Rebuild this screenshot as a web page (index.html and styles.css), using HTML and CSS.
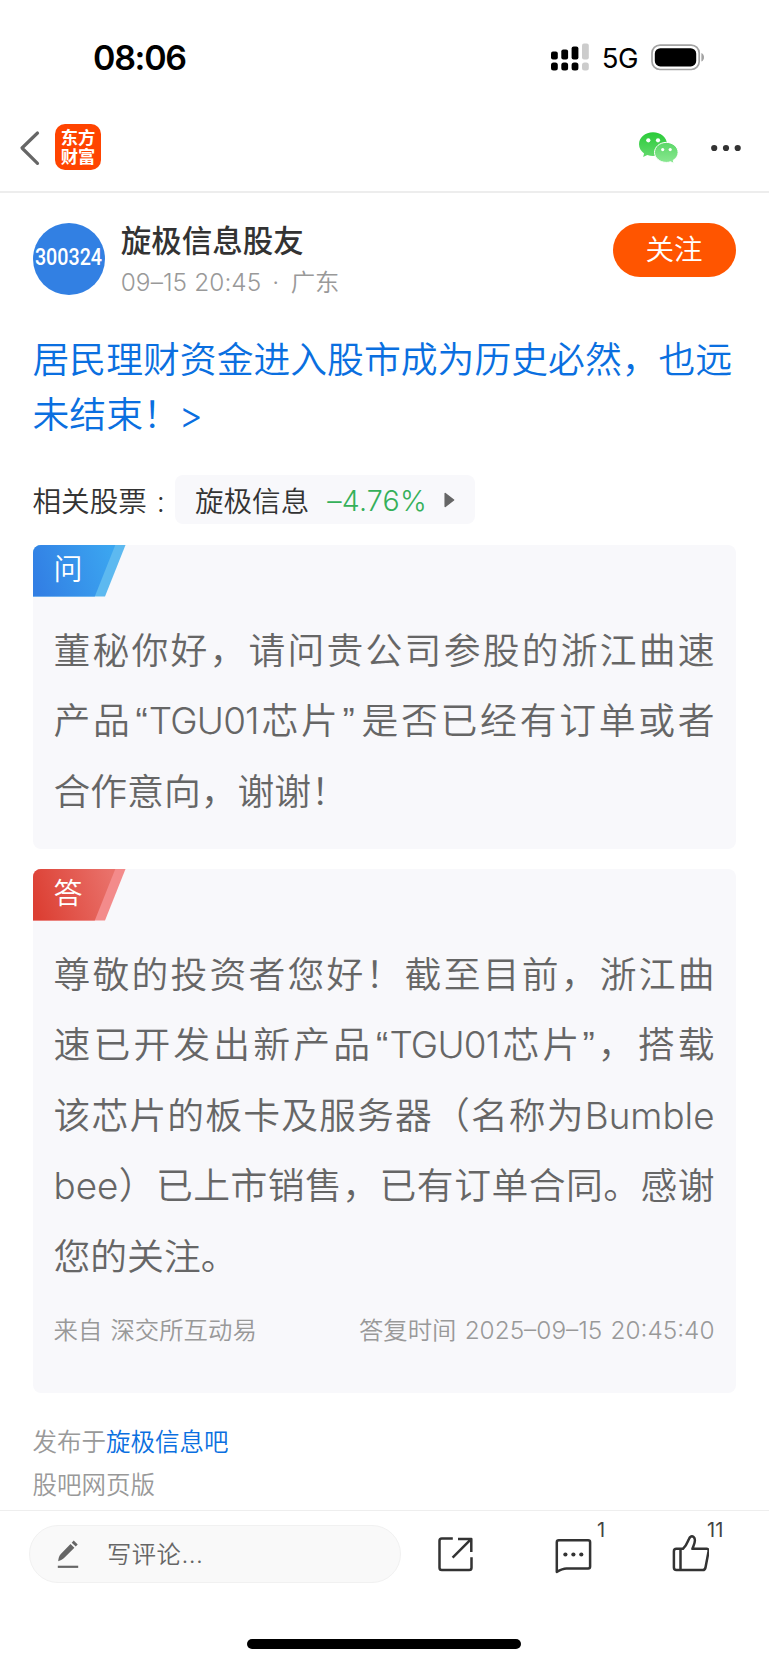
FILE: index.html
```html
<!DOCTYPE html>
<html lang="zh-CN">
<head>
<meta charset="utf-8">
<title>旋极信息吧</title>
<link rel="stylesheet" href="styles.css">
</head>
<body>
<div class="status-bar">
  <span class="clock">08:06</span>
  <div class="status-icons">
    <svg class="signal" width="38" height="28" viewBox="0 0 38 28">
      <rect x="0" y="8.5" width="6.8" height="8" rx="2"/><rect x="10.3" y="6.5" width="6.8" height="10" rx="2"/><rect x="20.6" y="3.5" width="6.8" height="13" rx="2"/><rect class="dim" x="31" y="0.5" width="6.8" height="16" rx="2"/>
      <rect x="0" y="19.5" width="6.8" height="8" rx="2.5"/><rect x="10.3" y="19.5" width="6.8" height="8" rx="2.5"/><rect x="20.6" y="19.5" width="6.8" height="8" rx="2.5"/><rect class="dim" x="31" y="19.5" width="6.8" height="8" rx="2.5"/>
    </svg>
    <span class="network">5G</span>
    <svg class="battery" width="54" height="27" viewBox="0 0 54 27">
      <rect x="1" y="1.1" width="47.2" height="24.4" rx="8" fill="none" stroke="#a3a3a3" stroke-width="1.7"/>
      <rect x="3.8" y="4.2" width="41.4" height="18.2" rx="5.5"/>
      <path d="M50.4 9v8.6c3.5-1.4 3.5-7.200 0-8.600z" fill="#a3a3a3"/>
    </svg>
  </div>
</div>

<div class="nav">
  <svg class="back" width="22" height="36" viewBox="0 0 22 36"><path d="M18.500 3 3 18l15.500 15.300" fill="none" stroke="#666" stroke-width="3.200" stroke-linecap="round" stroke-linejoin="round"/></svg>
  <div class="logo"><span>东方</span><span>财富</span></div>
  <svg class="wechat" width="40" height="33" viewBox="0 0 40 33">
    <defs>
      <linearGradient id="wg1" x1="0" y1="0" x2="0" y2="1"><stop offset="0" stop-color="#2acb38"/><stop offset="1" stop-color="#63d96d"/></linearGradient>
      <linearGradient id="wg2" x1="0" y1="0" x2="0" y2="1"><stop offset="0" stop-color="#5cd768"/><stop offset="1" stop-color="#8be892"/></linearGradient>
    </defs>
    <path d="M14 .3C6.200.3 0 5.600 0 12.200c0 3.700 2 7 5.100 9.200l-1 3.600 4.200-2.100c1.800.7 3.700 1 5.700 1 7.800 0 14-5.200 14-11.700S21.800.3 14 .3z" fill="url(#wg1)"/>
    <path d="M27.300 10.400c-6.500 0-11.800 4.500-11.800 10s5.300 10 11.800 10c1.500 0 2.900-.2 4.300-.7l3.400 1.900-.8-3.300c3-1.800 4.900-4.700 4.900-7.900 0-5.500-5.300-10-11.800-10z" fill="url(#wg2)" stroke="#fff" stroke-width="1"/>
    <g fill="#fff"><circle cx="9.300" cy="8.300" r="2.100"/><circle cx="19" cy="8.300" r="2.100"/><circle cx="23.700" cy="17.600" r="1.600"/><circle cx="31.200" cy="17.600" r="1.600"/></g>
  </svg>
  <svg class="more" width="30" height="8" viewBox="0 0 30 8"><g fill="#333"><circle cx="3.200" cy="4" r="3.100"/><circle cx="15" cy="4" r="3.100"/><circle cx="26.700" cy="4" r="3.100"/></g></svg>
</div>

<main class="post">
  <div class="author">
    <div class="avatar"><span>300324</span></div>
    <div class="author-info">
      <div class="name">旋极信息股友</div>
      <div class="meta"><span class="date">09–15 20:45</span><span class="dot">·</span><span>广东</span></div>
    </div>
    <div class="follow">关注</div>
  </div>

  <h1 class="title"><span>居民理财资金进入股市成为历史必然，也远</span><span>未结束！<span class="arrow">&gt;</span></span></h1>

  <div class="related">
    <span>相关股票<span class="colon">:</span></span>
    <div class="chip"><span>旋极信息</span><span class="change">–4.76%</span><svg width="11" height="16" viewBox="0 0 11 16"><path d="M1.200 1.500v13L9.600 8z" fill="#666" stroke="#666" stroke-width="1.500" stroke-linejoin="round"/></svg></div>
  </div>

  <section class="card question">
    <div class="badge"><svg class="ribbon" width="93" height="52" viewBox="0 0 93 52">
      <defs><linearGradient id="blue" x1="0" y1="0.600" x2="1" y2="0.400"><stop offset="0" stop-color="#327fe4"/><stop offset="1" stop-color="#3ba5f0"/></linearGradient></defs>
      <path d="M0 0H92.500L72 51.500H0z" fill="#5db9f0"/><path d="M0 0H82.300L61.800 51.500H0z" fill="url(#blue)"/></svg><span>问</span></div>
    <p class="text"><span>董秘你好，请问贵公司参股的浙江曲速</span><span>产品<q class="open">“</q><b>TGU01</b>芯片<q class="close">”</q>是否已经有订单或者</span><span class="last">合作意向，谢谢！</span></p>
  </section>

  <section class="card answer">
    <div class="badge"><svg class="ribbon" width="93" height="52" viewBox="0 0 93 52">
      <defs><linearGradient id="red" x1="0" y1="0.600" x2="1" y2="0.400"><stop offset="0" stop-color="#dc3f33"/><stop offset="1" stop-color="#e9716a"/></linearGradient></defs>
      <path d="M0 0H92.500L72 51.500H0z" fill="#f38b8b"/><path d="M0 0H82.300L61.800 51.500H0z" fill="url(#red)"/></svg><span>答</span></div>
    <p class="text"><span>尊敬的投资者您好！截至目前，浙江曲</span><span>速已开发出新产品<q class="open">“</q><b>TGU01</b>芯片<q>”</q>，搭载</span><span>该芯片的板卡及服务器（名称为Bumble</span><span>bee）已上市销售，已有订单合同。感谢</span><span class="last">您的关注。</span></p>
    <div class="source"><span>来自 深交所互动易</span><span class="time">答复时间 2025–09–15 20:45:40</span></div>
  </section>

  <div class="origin">
    <div>发布于<span class="link">旋极信息吧</span></div>
    <div>股吧网页版</div>
  </div>
</main>

<footer class="toolbar">
  <div class="comment-box">
    <svg width="24" height="30" viewBox="0 0 24 30"><path d="M1.200 22.300c.2-3 .8-5.300 2.600-7.300L13.500 5l3.900 3.800L7.600 18.500c-1.900 1.800-3.800 2.800-6.400 3.800zM14.700 3.700l2-2.100 4 3.900-2 2.100z" fill="#666"/><path d="M.8 27.800h20.400" stroke="#666" stroke-width="2.200"/></svg>
    <span>写评论...</span>
  </div>
  <div class="actions">
    <div class="action"><svg width="40" height="40" viewBox="0 0 40 40"><path d="M17.800 4.400H6.800c-1.300 0-2.300 1-2.300 2.300v27c0 1.300 1 2.300 2.300 2.300h27.400c1.300 0 2.300-1 2.300-2.300V23.200M23 4.900h13.300v13.200M35.800 5.400 17.600 23.600"/></svg></div>
    <div class="action"><svg width="40" height="40" viewBox="0 0 40 40"><path d="M6.800 6.200h29.300c1.100 0 2 .9 2 2v24.300c0 1.100-.9 2-2 2H14.500c-3 0-6.500 1.500-9.700 3.400V8.200c0-1.100.9-2 2-2z"/><g class="solid"><circle cx="13.400" cy="20.500" r="2.100"/><circle cx="21.400" cy="20.500" r="2.100"/><circle cx="29.300" cy="20.500" r="2.100"/></g></svg><span class="count">1</span></div>
    <div class="action"><svg width="40" height="40" viewBox="0 0 40 40"><path d="M14 14.800c3.300-2.800 4.200-6 5.800-9.600 1.200-3 3.300-3.400 4.800-2.200 3.500 2.900-.3 9-1.200 11.800h14.200c1.500 0 2.300 1.100 2 2.500l-3.200 16.600c-.3 1.300-1.200 2.100-2.500 2.100H7.400c-1.500 0-2.500-1-2.500-2.500V17.300c0-1.500 1-2.500 2.500-2.500zM11.500 15.500v19.800"/></svg><span class="count">11</span></div>
  </div>
</footer>
<div class="home"><div class="home-bar"></div></div>
</body>
</html>
```
FILE: styles.css
```css
* { box-sizing: border-box; }
body {
  margin: 0;
  height: 1665px;
  display: flex;
  flex-direction: column;
  background: #fff;
  color: #333;
  font-family: Inter, "Noto Sans CJK SC", sans-serif;
  font-weight: 350;
  text-spacing-trim: space-all;
  overflow: hidden;
}
svg { display: block; flex: none; }
span, div { white-space: nowrap; }

.status-bar {
  height: 103px;
  padding: 11px 64px 0 93px;
  display: flex;
  align-items: center;
  justify-content: space-between;
  color: #000;
}
.clock { font-size: 34px; font-weight: 600; line-height: 40px; letter-spacing: -1.300px; padding-top: 2px; }
.status-icons { display: flex; align-items: center; }
.dim { fill: #ccc; }
.network { font-size: 27.500px; font-weight: 400; line-height: 30px; margin: 2px 13px 0 13px; letter-spacing: -0.5px; }

.nav {
  height: 90px;
  padding: 0 28px 0 19px;
  display: flex;
  align-items: center;
  border-bottom: 2px solid #ededed;
}
.back, .wechat, .more { position: relative; top: 1px; }
.logo {
  width: 46px;
  height: 46px;
  margin-left: 14px;
  border-radius: 10px;
  background: #ff4400;
  color: #fff;
  display: flex;
  flex-direction: column;
  align-items: center;
  justify-content: center;
  font-size: 17.300px;
  font-weight: 700;
  line-height: 19px;
}
.wechat { margin-left: auto; }
.more { margin-left: 32px; }

.post { padding: 30px 33.500px 0 32.500px; height: 1317px; }
.author { display: flex; height: 72px; }
.avatar {
  width: 72px;
  height: 72px;
  border-radius: 50%;
  background: #3280e3;
  color: #fff;
  display: flex;
  align-items: center;
  justify-content: center;
  font-family: Roboto, sans-serif;
  font-size: 19.700px;
  font-weight: 500;
}
.avatar span { line-height: 24px; transform: scaleY(1.170); margin-top: -3px; }
.author-info { margin-left: 16.200px; }
.name { font-size: 30.500px; line-height: 36px; font-weight: 500; }
.meta { display: flex; font-size: 24.400px; line-height: 34px; margin-top: 6px; color: #999; }
.date { width: 140px; letter-spacing: 0.1px; }
.dot { width: 30px; text-align: center; }
.follow {
  margin-left: auto;
  width: 123px;
  height: 54px;
  border-radius: 27px;
  background: #ff5500;
  color: #fff;
  font-size: 28.600px;
  line-height: 53px;
  text-align: center;
}

.title { margin: 37px 0 0; font-size: 36.850px; line-height: 55px; font-weight: inherit; color: #0a6fe0; }
.title > span { display: block; }
.arrow { margin-left: -1px; }

.related { display: flex; align-items: center; margin-top: 33px; height: 49px; font-size: 28.600px; }
.colon { display: inline-block; width: 28px; text-align: center; }
.chip {
  display: flex;
  align-items: center;
  width: 300px;
  height: 49px;
  padding-left: 20px;
  border-radius: 8px;
  background: #f8f8fb;
}
.change { color: #35b05a; width: 98px; margin: 1px 19px 0 18px; letter-spacing: 0.2px; }

.card { background: #f8f8fb; border-radius: 8px; overflow: hidden; margin-top: 20px; padding: 0 21px; }
.question { height: 304px; margin-top: 20.500px; }
.answer { height: 524px; }
.badge { display: grid; margin-left: -21px; height: 52px; color: #fff; }
.badge > * { grid-area: 1 / 1; }
.badge span { padding-left: 21px; font-size: 29px; line-height: 50px; }
.text { margin: 19px 0 0; font-size: 36.800px; line-height: 70.500px; color: #666; }
.text > span { display: block; text-align-last: justify; }
.text > .last { text-align-last: left; }
.text b { font-weight: inherit; letter-spacing: -0.8px; }
q { quotes: none; font-family: "Liberation Sans", sans-serif; line-height: 1; }
.open { margin-left: 3px; margin-right: 1px; }
.close { margin: 0 4px 0 2px; }
.source { display: flex; justify-content: space-between; margin-top: 21px; font-size: 24.400px; line-height: 34px; color: #999; word-spacing: 1.300px; }

.origin { margin-top: 28px; font-size: 24.500px; line-height: 43px; color: #999; }
.link { color: #0a6fe0; }

.toolbar {
  height: 90px;
  padding: 14px 0 0 29px;
  border-top: 1px solid #eee;
  display: flex;
}
.comment-box {
  width: 372px;
  height: 58px;
  padding-left: 27px;
  display: flex;
  align-items: center;
  border: 1px solid #f1f1f1;
  border-radius: 30px;
  background: #f9f9f9;
  color: #666;
  font-size: 24.300px;
}
.comment-box span { margin: -3px 0 0 26px; letter-spacing: 0.5px; }
.actions { display: flex; gap: 77px; margin: 9px 0 0 34px; }
.action { position: relative; width: 40px; height: 40px; }
.action svg { fill: none; stroke: #333; stroke-width: 2.500; stroke-linecap: butt; stroke-linejoin: round; }
.action .solid { fill: #333; stroke: none; }
.count { position: absolute; left: 45px; top: -15px; font-size: 20px; line-height: 22px; font-weight: 400; color: #444; }
.action:last-child .count { left: 38px; }

.home { flex: 1; padding: 39px 0 0 247px; }
.home-bar { width: 274px; height: 10px; border-radius: 5px; background: #000; }
```
